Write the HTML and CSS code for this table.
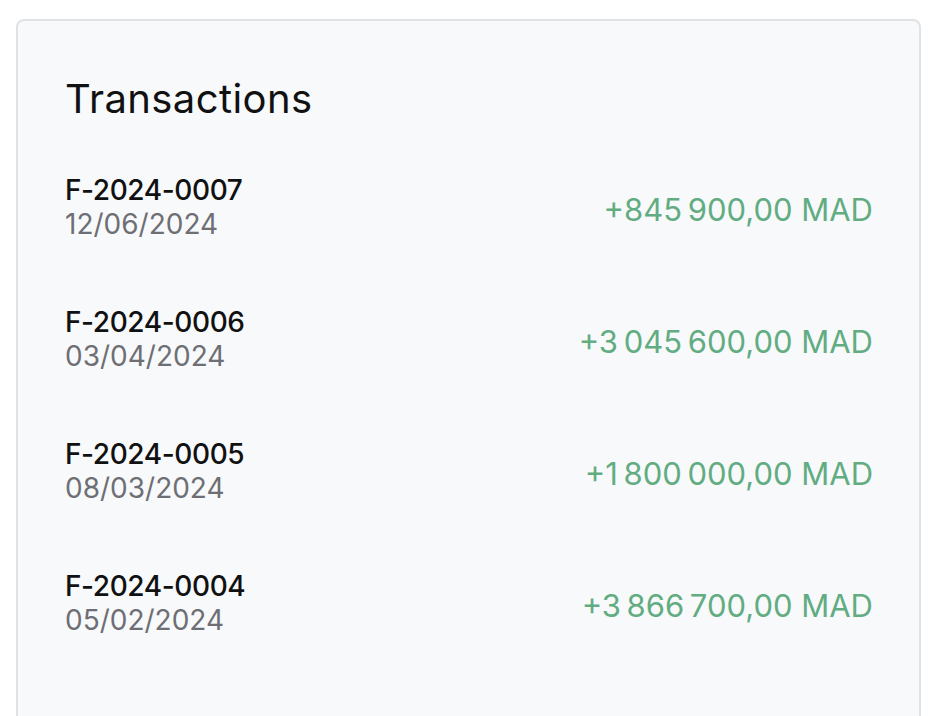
FILE: index.html
```html
<!DOCTYPE html>
<html lang="fr">
<head>
<meta charset="utf-8">
<link rel="stylesheet" href="styles.css">
<title>Transactions</title>
</head>
<body>
<section class="card">
  <h2 class="card-title">Transactions</h2>
  <ul class="tx-list">
    <li class="tx">
      <div class="tx-info">
        <span class="tx-id">F-2024-0007</span>
        <span class="tx-date">12/06/2024</span>
      </div>
      <span class="tx-amount">+845&#8239;900,00 MAD</span>
    </li>
    <li class="tx">
      <div class="tx-info">
        <span class="tx-id">F-2024-0006</span>
        <span class="tx-date">03/04/2024</span>
      </div>
      <span class="tx-amount">+3&#8239;045&#8239;600,00 MAD</span>
    </li>
    <li class="tx">
      <div class="tx-info">
        <span class="tx-id">F-2024-0005</span>
        <span class="tx-date">08/03/2024</span>
      </div>
      <span class="tx-amount">+1&#8239;800&#8239;000,00 MAD</span>
    </li>
    <li class="tx">
      <div class="tx-info">
        <span class="tx-id">F-2024-0004</span>
        <span class="tx-date">05/02/2024</span>
      </div>
      <span class="tx-amount">+3&#8239;866&#8239;700,00 MAD</span>
    </li>
  </ul>
</section>
</body>
</html>
```
FILE: styles.css
```css
html, body {
  margin: 0;
  padding: 0;
  background: #ffffff;
}
body {
  font-family: Inter, "Liberation Sans", sans-serif;
  padding: 19px 13px 0 16px;
}
.card {
  background: #f8f9fb;
  border: 2px solid #e0e2e5;
  border-radius: 8px;
  padding: 54px 46px 120px 47px;
}
.card-title {
  margin: 0;
  font-size: 40px;
  line-height: 48px;
  font-weight: 400;
  letter-spacing: 0.4px;
  color: #111111;
}
.tx-list {
  list-style: none;
  margin: 18px 0 0 0;
  padding: 0;
}
.tx {
  display: flex;
  justify-content: space-between;
  align-items: center;
  padding: 32px 0;
}
.tx-info {
  display: flex;
  flex-direction: column;
}
.tx-id {
  font-size: 28px;
  line-height: 34px;
  font-weight: 500;
  letter-spacing: -0.4px;
  color: #111111;
}
.tx-date {
  font-size: 28px;
  line-height: 34px;
  color: #6e6f74;
}
.tx-amount {
  font-size: 31px;
  line-height: 36px;
  padding-top: 5px;
  color: #62ac82;
}
```
